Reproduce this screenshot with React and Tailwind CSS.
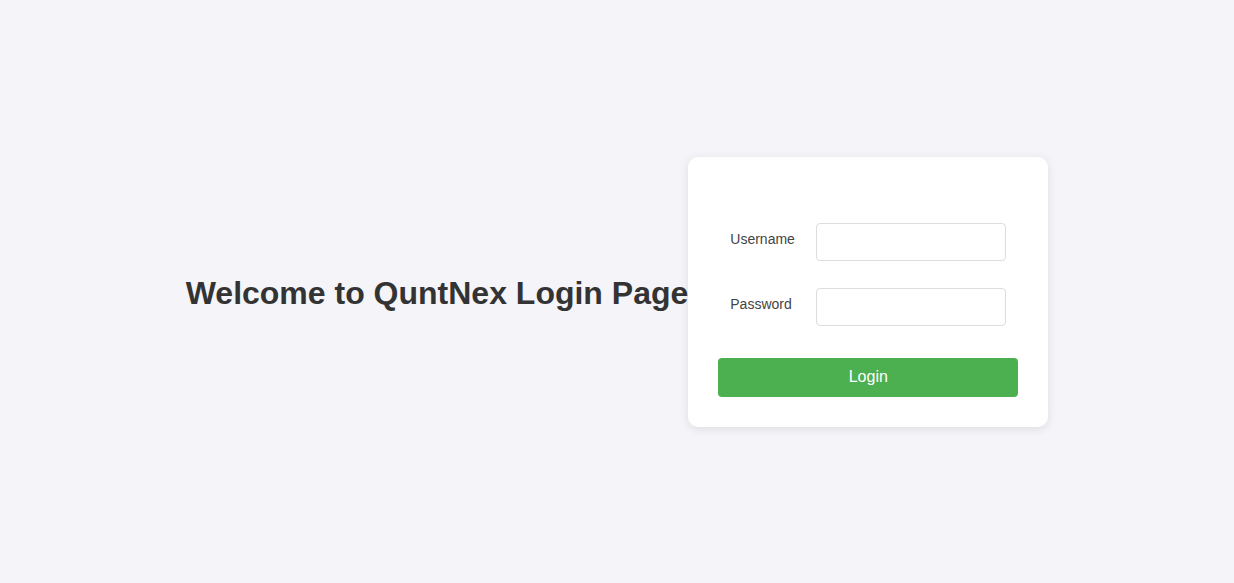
export default function App() {
  return (
    <div
      className="min-h-screen w-full bg-[#f4f4f9] flex items-center justify-center"
      style={{ fontFamily: '"Liberation Sans", Arial, sans-serif' }}
    >
      <h1 className="text-[32px] leading-[37px] font-bold text-[#333333] m-0 mt-[3px]">
        Welcome to QuntNex Login Page
      </h1>
      <div className="w-[360px] bg-white rounded-[10px] shadow-[0_2px_10px_rgba(0,0,0,0.1)] px-[30px] pt-[66px] pb-[30px] flex flex-col">
        <div className="flex items-center px-3 h-[38px]">
          <label className="w-[86px] text-[14px] text-[#444] -mt-[4px]">Username</label>
          <input
            type="text"
            className="w-[190px] h-[38px] border border-[#dddddd] rounded-[4px] px-2 text-[14px] outline-none bg-white"
          />
        </div>
        <div className="flex items-center px-3 h-[38px] mt-[27px]">
          <label className="w-[86px] text-[14px] text-[#444] -mt-[4px]">Password</label>
          <input
            type="password"
            className="w-[190px] h-[38px] border border-[#dddddd] rounded-[4px] px-2 text-[14px] outline-none bg-white"
          />
        </div>
        <button className="mt-[32px] w-[300px] h-[39px] bg-[#4caf50] text-white text-[16px] rounded-[4px] border-0 cursor-pointer">
          Login
        </button>
      </div>
    </div>
  );
}
